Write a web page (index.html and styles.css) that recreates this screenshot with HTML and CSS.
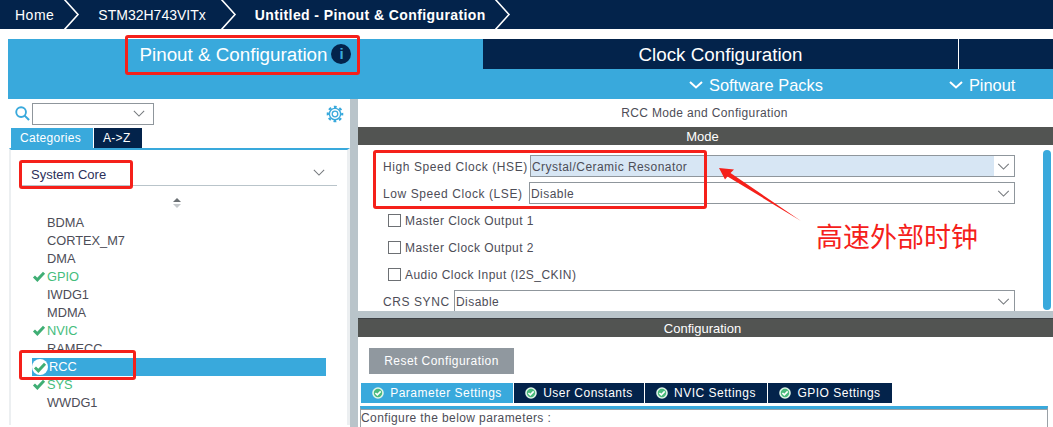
FILE: index.html
```html
<!DOCTYPE html>
<html lang="en">
<head>
    <meta charset="UTF-8">
    <title>Untitled - Pinout &amp; Configuration</title>
    <link rel="stylesheet" href="styles.css">
</head>
<body>
    <svg class="icon-defs" width="0" height="0">
        <symbol id="crumb" viewBox="0 0 17 29"><path d="M1 -1 L15 14.5 L1 30" fill="none" stroke="#fff" stroke-width="1.6"/></symbol>
        <symbol id="chev" viewBox="0 0 14 8"><path d="M1 1 L7 7 L13 1" fill="none" stroke="currentColor" stroke-width="1.2"/></symbol>
        <symbol id="chev-bold" viewBox="0 0 14 8"><path d="M1 1 L7 6.5 L13 1" fill="none" stroke="currentColor" stroke-width="2"/></symbol>
        <symbol id="tick" viewBox="0 0 14 12"><path d="M1.5 6 L5.2 9.6 L12.5 2" fill="none" stroke="#3fae74" stroke-width="3.2"/></symbol>
        <symbol id="tab-ok" viewBox="0 0 12 12"><circle cx="6" cy="6" r="5" fill="#4aba7c" stroke="#dff5e8" stroke-width="1.6"/><path d="M3.4 6 L5.3 7.9 L8.7 4.4" fill="none" stroke="#fff" stroke-width="1.6"/></symbol>
    </svg>

    <div class="crumbs">
        <span class="crumb first">Home</span>
        <svg class="crumb-arrow"><use href="#crumb"/></svg>
        <span class="crumb second">STM32H743VITx</span>
        <svg class="crumb-arrow"><use href="#crumb"/></svg>
        <span class="crumb current">Untitled - Pinout &amp; Configuration</span>
        <svg class="crumb-arrow"><use href="#crumb"/></svg>
    </div>

    <div class="main-tabs">
        <div class="main-tab active">
            <span>Pinout &amp; Configuration</span>
            <span class="info-badge">i</span>
        </div>
        <div class="main-tab clock">Clock Configuration</div>
        <div class="main-tab rest"></div>
    </div>
    <div class="sub-menu">
        <div class="sub-item packs"><svg class="sub-chev"><use href="#chev-bold"/></svg>Software Packs</div>
        <div class="sub-item pinout"><svg class="sub-chev"><use href="#chev-bold"/></svg>Pinout</div>
    </div>

    <div class="workspace">
        <div class="left-panel">
            <div class="search-row">
                <svg class="search-icon" viewBox="0 0 16 16"><circle cx="6.5" cy="6.5" r="5.2" fill="none" stroke="#39a9dc" stroke-width="2"/><path d="M10 10 L15 15" stroke="#39a9dc" stroke-width="2.2"/></svg>
                <div class="search-box"><svg class="select-chev"><use href="#chev"/></svg></div>
                <svg class="gear-icon" viewBox="0 0 18 18"><circle cx="9" cy="9" r="2.8" fill="none" stroke="#39a9dc" stroke-width="1.3"/><circle cx="9" cy="9" r="5.6" fill="none" stroke="#39a9dc" stroke-width="1.4"/><circle cx="9" cy="9" r="7.2" fill="none" stroke="#39a9dc" stroke-width="2.2" stroke-dasharray="2.83 2.83" stroke-dashoffset="1.4"/></svg>
            </div>
            <div class="side-tabs">
                <div class="side-tab active">Categories</div>
                <div class="side-tab az">A-&gt;Z</div>
            </div>
            <div class="side-body">
                <div class="category">
                    <span>System Core</span>
                    <svg class="select-chev"><use href="#chev"/></svg>
                </div>
                <div class="sort-arrows"><i class="up"></i><i class="down"></i></div>
                <ul class="ip-list">
                    <li>BDMA</li>
                    <li>CORTEX_M7</li>
                    <li>DMA</li>
                    <li class="ok"><svg class="tick"><use href="#tick"/></svg>GPIO</li>
                    <li>IWDG1</li>
                    <li>MDMA</li>
                    <li class="ok"><svg class="tick"><use href="#tick"/></svg>NVIC</li>
                    <li>RAMECC</li>
                    <li class="selected"><span class="tick-round"><svg class="tick"><use href="#tick"/></svg></span>RCC</li>
                    <li class="ok"><svg class="tick"><use href="#tick"/></svg>SYS</li>
                    <li>WWDG1</li>
                </ul>
            </div>
        </div>

        <div class="right-panel">
            <div class="panel-title">RCC Mode and Configuration</div>
            <div class="bar">Mode</div>
            <div class="mode-body">
                <div class="form-row hse">
                    <label>High Speed Clock (HSE)</label>
                    <div class="select filled"><span>Crystal/Ceramic Resonator</span><svg class="select-chev"><use href="#chev"/></svg></div>
                </div>
                <div class="form-row lse">
                    <label>Low Speed Clock (LSE)</label>
                    <div class="select"><span>Disable</span><svg class="select-chev"><use href="#chev"/></svg></div>
                </div>
                <div class="check-row"><i class="checkbox"></i>Master Clock Output 1</div>
                <div class="check-row"><i class="checkbox"></i>Master Clock Output 2</div>
                <div class="check-row"><i class="checkbox"></i>Audio Clock Input (I2S_CKIN)</div>
                <div class="form-row crs">
                    <label>CRS SYNC</label>
                    <div class="select"><span>Disable</span><svg class="select-chev"><use href="#chev"/></svg></div>
                </div>
                <div class="v-scroll"></div>
            </div>
            <div class="h-split"></div>
            <div class="bar">Configuration</div>
            <div class="config-body">
                <div class="reset-btn">Reset Configuration</div>
                <div class="config-tabs">
                    <div class="config-tab active"><svg class="tab-ok"><use href="#tab-ok"/></svg>Parameter Settings</div>
                    <div class="config-tab user"><svg class="tab-ok"><use href="#tab-ok"/></svg>User Constants</div>
                    <div class="config-tab nvic"><svg class="tab-ok"><use href="#tab-ok"/></svg>NVIC Settings</div>
                    <div class="config-tab gpio"><svg class="tab-ok"><use href="#tab-ok"/></svg>GPIO Settings</div>
                </div>
                <div class="params-box">Configure the below parameters :</div>
            </div>
        </div>
    </div>

    <!-- red annotations drawn over the screenshot -->
    <div class="mark mark-tab"></div>
    <div class="mark mark-core"></div>
    <div class="mark mark-rcc"></div>
    <div class="mark mark-clock"></div>
    <svg class="note-arrow" viewBox="0 0 84 55"><path d="M1 1 L16 2.5 L12.5 6 L83 54 L9.5 9.5 L7 12.5 Z" fill="#f5201a"/></svg>
    <div class="note-text">高速外部时钟</div>
</body>
</html>
```

FILE: styles.css
```css
body {
    font-family: "Liberation Sans", Arial, sans-serif;
    margin: 0;
    padding: 0;
    width: 1053px;
    height: 427px;
    overflow: hidden;
    position: relative;
    background-color: white;
    color: #4d4d57;
}
.icon-defs {
    position: absolute;
}

/* breadcrumb */
.crumbs {
    display: flex;
    align-items: center;
    height: 29px;
    background-color: #03234b;
    color: white;
    font-size: 14px;
    margin-bottom: 10px;
}
.crumb-arrow {
    width: 17px;
    height: 29px;
}
.crumb.first {
    padding: 0 9px 0 15px;
    letter-spacing: 0.5px;
}
.crumb.second {
    padding: 0 14px 0 18px;
}
.crumb.current {
    padding: 0 8px 0 18px;
    font-weight: bold;
    letter-spacing: 0.4px;
}

/* top tabs */
.main-tabs {
    display: flex;
    height: 30px;
    margin-left: 8px;
    background-color: #03234b;
    color: white;
    font-size: 18.8px;
}
.main-tab {
    display: flex;
    align-items: center;
    justify-content: center;
    padding-top: 1px;
    box-sizing: border-box;
}
.main-tab.active {
    width: 475px;
    gap: 4px;
    background-color: #39a9dc;
}
.main-tab.clock {
    width: 476px;
    border-right: 1px solid white;
}
.info-badge {
    width: 20px;
    height: 20px;
    margin-top: -2px;
    border-radius: 50%;
    background-color: #03234b;
    color: #39a9dc;
    font-size: 15px;
    font-weight: bold;
    line-height: 20px;
    text-align: center;
}
.sub-menu {
    display: flex;
    height: 30px;
    margin-left: 8px;
    padding-top: 2px;
    box-sizing: border-box;
    align-items: center;
    background-color: #39a9dc;
    color: white;
    font-size: 16.4px;
}
.sub-item {
    display: flex;
    align-items: center;
    gap: 6px;
}
.sub-item.packs {
    margin-left: 681px;
}
.sub-item.pinout {
    margin-left: 126px;
}
.sub-chev {
    width: 14px;
    height: 8px;
}

/* workspace */
.workspace {
    display: flex;
    height: 328px;
    margin-left: 8px;
}
.left-panel {
    width: 342px;
    border-right: 8px solid #b9c4ca;
}
.search-row {
    display: flex;
    align-items: center;
    height: 29px;
    padding-left: 7px;
}
.search-icon {
    width: 15px;
    height: 15px;
    margin-right: 2px;
}
.search-box {
    width: 120px;
    height: 20px;
    border: 1px solid #8f969c;
    display: flex;
    align-items: center;
    justify-content: flex-end;
}
.gear-icon {
    width: 18px;
    height: 18px;
    margin-left: 172px;
}
.select-chev {
    width: 12px;
    height: 7px;
    margin-right: 8px;
    color: #75797d;
    flex-shrink: 0;
}
.side-tabs {
    display: flex;
    height: 20px;
    margin-left: 3px;
    gap: 1px;
    font-size: 12px;
    letter-spacing: 0.3px;
    color: white;
}
.side-tab {
    padding: 0 9px;
    line-height: 20px;
    background-color: #03234b;
    box-sizing: border-box;
}
.side-tab.az {
    width: 48px;
}
.side-tab.active {
    width: 82px;
    background-color: #39a9dc;
}
.side-body {
    border-top: 2px solid #39a9dc;
    border-left: 2px solid #eceff1;
    border-right: 3px solid #eceff1;
    height: 277px;
    box-sizing: border-box;
    margin-left: 1px;
    padding-top: 1px;
}
.category {
    display: flex;
    align-items: center;
    justify-content: space-between;
    height: 35px;
    margin: 0 10px 0 9px;
    padding: 12px 0 0 11px;
    box-sizing: border-box;
    border-bottom: 1px solid #b9c4ca;
    font-size: 13px;
    color: #2c2f5a;
}
.category .select-chev {
    margin-right: 12px;
    margin-top: -4px;
}
.sort-arrows {
    display: flex;
    flex-direction: column;
    align-items: center;
    gap: 2px;
    margin: 12px 0 0 0;
    padding-right: 4px;
}
.sort-arrows i {
    width: 0;
    height: 0;
    border-left: 4px solid transparent;
    border-right: 4px solid transparent;
}
.sort-arrows .up {
    border-bottom: 4px solid #6b7074;
}
.sort-arrows .down {
    border-top: 4px solid #c4c8cb;
}
.ip-list {
    list-style: none;
    margin: 6px 0 0 0;
    padding: 0;
    font-size: 12.8px;
}
.ip-list li {
    height: 18px;
    line-height: 17px;
    padding-left: 36px;
    position: relative;
}
.tick {
    position: absolute;
    left: 21px;
    top: 3px;
    width: 14px;
    height: 11px;
}
.ip-list li.ok {
    color: #45bd7c;
}
.ip-list li.selected {
    background-color: #39a9dc;
    color: white;
    margin-left: 21px;
    margin-right: 21px;
    padding-left: 17px;
}
.tick-round {
    position: absolute;
    left: 0;
    top: 1px;
    width: 16px;
    height: 16px;
    border-radius: 50%;
    background-color: white;
}
.tick-round .tick {
    left: 1px;
    top: 3px;
}

/* right side */
.right-panel {
    flex: 1;
    min-width: 0;
}
.panel-title {
    height: 28px;
    line-height: 29px;
    padding-right: 2px;
    text-align: center;
    font-size: 12px;
    letter-spacing: 0.35px;
}
.bar {
    height: 18px;
    line-height: 19px;
    padding-right: 6px;
    background-color: #525452;
    color: white;
    font-size: 13px;
    text-align: center;
}
.mode-body {
    height: 166px;
    overflow: hidden;
    position: relative;
    font-size: 12px;
    letter-spacing: 0.45px;
}
.form-row {
    display: flex;
    align-items: center;
    height: 22px;
    padding-left: 25px;
}
.form-row label {
    padding-top: 1px;
    letter-spacing: 0.58px;
}
.form-row.hse {
    margin-top: 10px;
}
.form-row.lse {
    margin-top: 5px;
}
.form-row.hse label {
    width: 147px;
}
.form-row.lse label {
    width: 146px;
}
.form-row.crs {
    margin-top: 2px;
}
.form-row.crs label {
    width: 71px;
}
.select {
    width: 0;
    flex: 1;
    margin-right: 38px;
    height: 22px;
    box-sizing: border-box;
    border: 1px solid #8f969c;
    display: flex;
    align-items: center;
    justify-content: space-between;
    padding: 1px 0 0 1px;
}
.select.filled {
    background: linear-gradient(to right, #d7e6f4 calc(100% - 20px), white calc(100% - 20px));
}
.select .select-chev {
    margin-right: 4px;
    width: 13px;
}
.check-row {
    display: flex;
    align-items: center;
    height: 27px;
    padding-left: 30px;
}
.lse + .check-row {
    margin-top: 3px;
}
.checkbox {
    width: 11px;
    height: 11px;
    border: 1px solid #6d7074;
    margin-right: 4px;
}
.v-scroll {
    position: absolute;
    top: 5px;
    right: 2px;
    width: 8px;
    height: 160px;
    border-radius: 4px;
    background-color: #39a9dc;
}
.h-split {
    height: 8px;
    background-color: #b9c4ca;
    box-sizing: border-box;
    border-bottom: 1px solid #3c4044;
}
.config-body {
    height: 90px;
    overflow: hidden;
}
.reset-btn {
    width: 145px;
    height: 26px;
    line-height: 26px;
    margin: 11px 0 9px 11px;
    text-align: center;
    background-color: #90989f;
    color: white;
    font-size: 12px;
    letter-spacing: 0.45px;
}
.config-tabs {
    display: flex;
    height: 20px;
    margin-left: 3px;
    font-size: 12px;
    letter-spacing: 0.5px;
    color: white;
}
.config-tab {
    display: flex;
    align-items: center;
    justify-content: center;
    gap: 6px;
    background-color: #03234b;
    border-right: 1px solid white;
    box-sizing: border-box;
}
.config-tab.active {
    width: 153px;
    background-color: #39a9dc;
}
.config-tab.user {
    width: 131px;
}
.config-tab.nvic {
    width: 123px;
}
.config-tab.gpio {
    width: 124px;
    border-right: none;
}
.tab-ok {
    width: 12px;
    height: 12px;
}
.params-box {
    margin: 3px 5px 0 2px;
    height: 22px;
    line-height: 19px;
    border: 1px solid #9aa1a7;
    border-top: 3px solid #39a9dc;
    box-shadow: inset 0 1px 0 #9aa1a7;
    font-size: 12px;
    letter-spacing: 0.4px;
}

/* red annotations */
.mark {
    position: absolute;
    box-sizing: border-box;
    border: 3px solid #f5201a;
    border-radius: 3px;
}
.mark-tab {
    left: 125px;
    top: 35px;
    width: 235px;
    height: 40px;
}
.mark-core {
    left: 19px;
    top: 160px;
    width: 114px;
    height: 29px;
}
.mark-rcc {
    left: 19px;
    top: 350px;
    width: 117px;
    height: 30px;
}
.mark-clock {
    left: 373px;
    top: 150px;
    width: 334px;
    height: 59px;
}
.note-arrow {
    position: absolute;
    left: 718px;
    top: 167px;
    width: 84px;
    height: 55px;
}
.note-text {
    position: absolute;
    left: 816px;
    top: 218px;
    font-family: "Noto Sans CJK SC", sans-serif;
    font-size: 27px;
    line-height: 36px;
    color: #f5201a;
}
```
